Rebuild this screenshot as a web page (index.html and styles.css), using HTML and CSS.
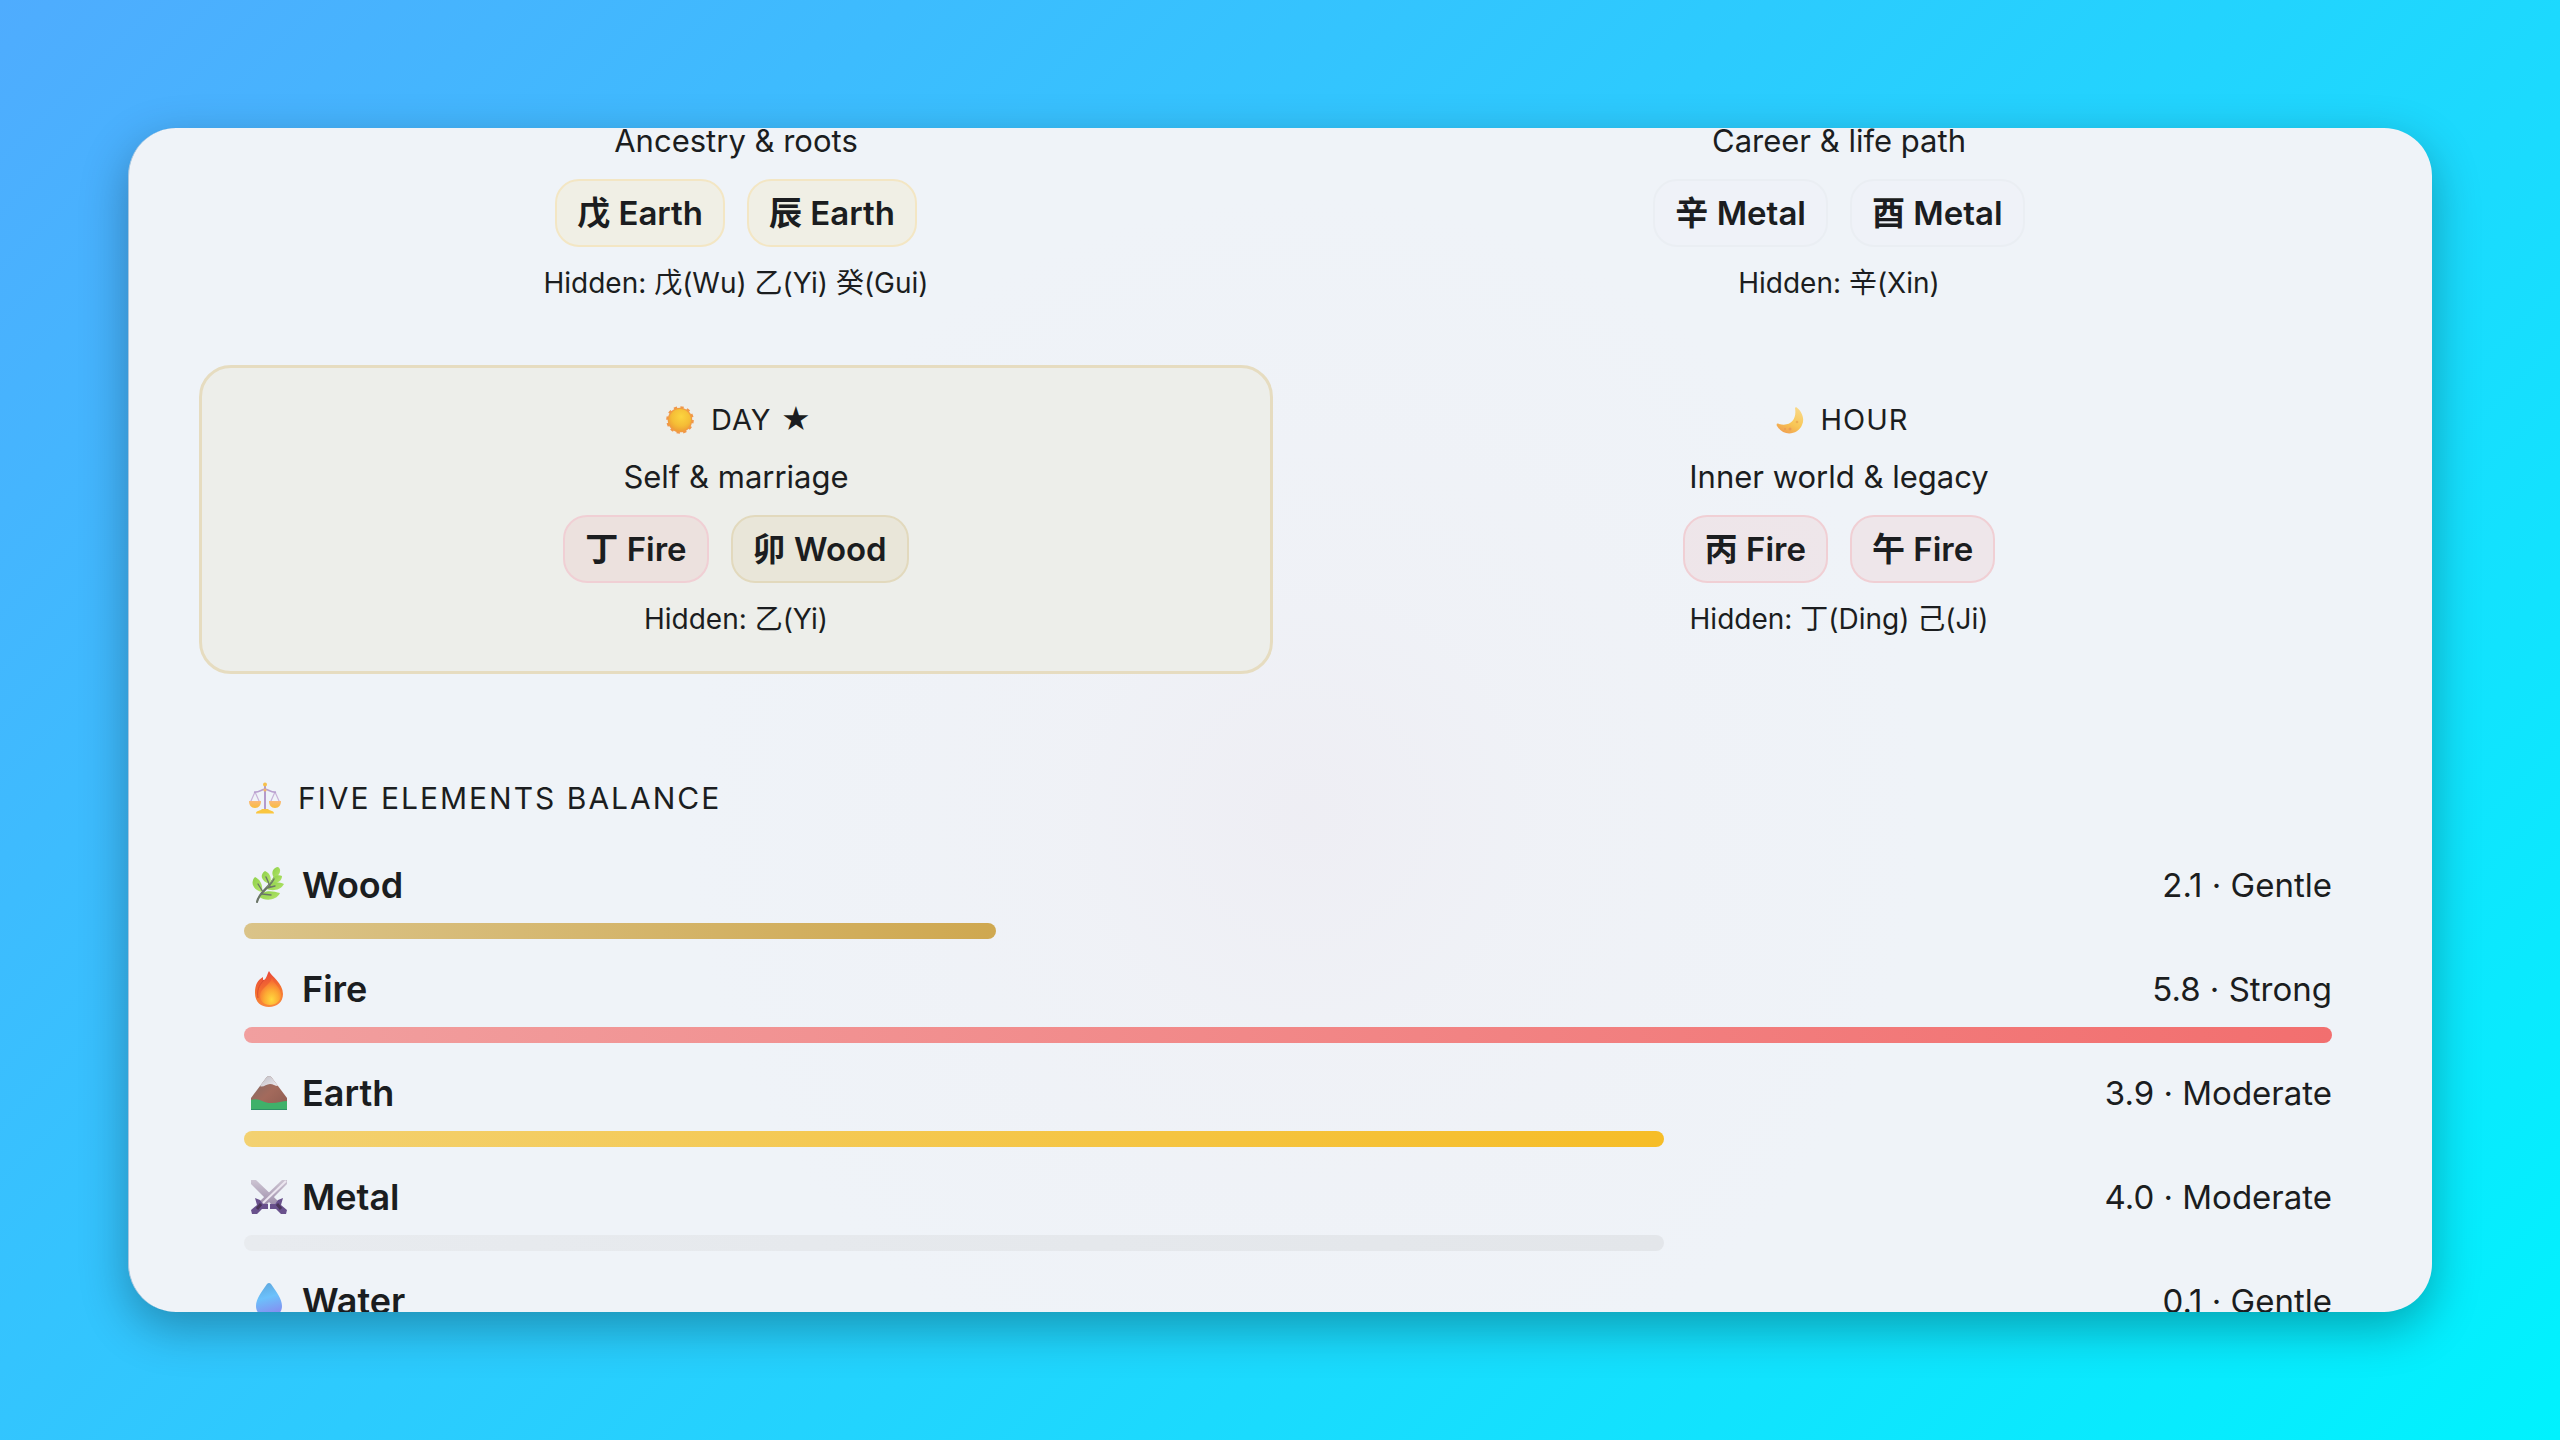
FILE: index.html
```html
<!DOCTYPE html>
<html lang="en">
<head>
<meta charset="utf-8">
<meta name="viewport" content="width=device-width, initial-scale=1">
<title>Five Elements Balance</title>
<link rel="stylesheet" href="styles.css">
</head>
<body>
<main class="sheet">
  <section class="pillars">
    <article class="pillar pillar--top">
      <p class="pillar-desc">Ancestry &amp; roots</p>
      <div class="chips">
        <span class="chip chip--earth">戊 Earth</span>
        <span class="chip chip--earth">辰 Earth</span>
      </div>
      <p class="hidden-stems">Hidden: 戊(Wu) 乙(Yi) 癸(Gui)</p>
    </article>
    <article class="pillar pillar--top">
      <p class="pillar-desc">Career &amp; life path</p>
      <div class="chips">
        <span class="chip chip--metal">辛 Metal</span>
        <span class="chip chip--metal">酉 Metal</span>
      </div>
      <p class="hidden-stems">Hidden: 辛(Xin)</p>
    </article>
    <article class="pillar pillar--day">
      <h2 class="pillar-label">
        <svg class="label-icon" viewBox="0 0 28 28" aria-hidden="true">
          <defs>
            <radialGradient id="sun" cx=".55" cy=".35" r=".7"><stop offset="0" stop-color="#fcd53f"/><stop offset=".6" stop-color="#f5bd36"/><stop offset="1" stop-color="#ee9a35"/></radialGradient>
          </defs>
          <circle cx="14" cy="14" r="12.600" fill="none" stroke="#f0974a" stroke-width="2.400" stroke-dasharray="3.300 3.300"/>
          <circle cx="14" cy="14" r="12.300" fill="#f19b42"/>
          <circle cx="14" cy="14" r="11" fill="url(#sun)"/>
        </svg>
        <span>DAY ★</span>
      </h2>
      <p class="pillar-desc">Self &amp; marriage</p>
      <div class="chips">
        <span class="chip chip--fire">丁 Fire</span>
        <span class="chip chip--wood">卯 Wood</span>
      </div>
      <p class="hidden-stems">Hidden: 乙(Yi)</p>
    </article>
    <article class="pillar">
      <h2 class="pillar-label">
        <svg class="label-icon" viewBox="0 0 28 28" aria-hidden="true">
          <defs>
            <linearGradient id="moon" x1=".8" y1="0" x2=".3" y2="1"><stop offset="0" stop-color="#f9d98a"/><stop offset=".6" stop-color="#f8c655"/><stop offset="1" stop-color="#f0a050"/></linearGradient>
          </defs>
          <path d="M20 1C26 5 29 13 26 19C22 29 7 31 1 20C0 18 1 17 3 18C15 21 21 13 19 2Z" fill="url(#moon)"/>
          <circle cx="21" cy="16" r="1.300" fill="#eeae50"/><circle cx="14" cy="23" r="1.500" fill="#eb9b56"/><circle cx="9" cy="23" r="1" fill="#eb9b56"/>
        </svg>
        <span>HOUR</span>
      </h2>
      <p class="pillar-desc">Inner world &amp; legacy</p>
      <div class="chips">
        <span class="chip chip--fire">丙 Fire</span>
        <span class="chip chip--fire">午 Fire</span>
      </div>
      <p class="hidden-stems">Hidden: 丁(Ding) 己(Ji)</p>
    </article>
  </section>

  <section class="balance">
    <h2 class="balance-title">
      <svg class="title-icon" viewBox="0 0 32 32" aria-hidden="true">
        <defs>
          <linearGradient id="pan" x1="0" y1="0" x2="0" y2="1"><stop offset="0" stop-color="#fbb978"/><stop offset="1" stop-color="#f9bc3c"/></linearGradient>
        </defs>
        <path d="M6 10L1.500 20M6 10L10.500 20M26 10L21.500 20M26 10L30.500 20" stroke="#c9b2d8" stroke-width="1.200" fill="none"/>
        <path d="M5 10C9 11 12 8 16 7C20 8 23 11 27 10" stroke="#b9a0cf" stroke-width="1.700" fill="none"/>
        <path d="M16 4V28" stroke="#b49acb" stroke-width="2"/>
        <circle cx="16" cy="2.500" r="2" fill="#f7c04a"/><circle cx="16" cy="8" r="1.600" fill="#f2b46b"/>
        <path d="M0 19H12C12 23 10 26 6 26S0 23 0 19ZM20 19H32C32 23 30 26 26 26S20 23 20 19Z" fill="url(#pan)"/>
        <path d="M7 31.500C7 28.500 11 29 13 27H19C21 29 25 28.500 25 31.500Z" fill="#fac640"/>
      </svg>
      <span>FIVE ELEMENTS BALANCE</span>
    </h2>
    <ul class="elements">
      <li class="element">
        <div class="element-head">
          <span class="element-name">
            <svg class="element-icon" viewBox="0 0 36 36" aria-hidden="true">
              <defs>
                <linearGradient id="leaf" x1="0" y1="0" x2="1" y2="1"><stop offset="0" stop-color="#8ed04a"/><stop offset="1" stop-color="#b4e56a"/></linearGradient>
              </defs>
              <path d="M6 35C8 24 18 22 25 8" fill="none" stroke="#6b7568" stroke-width="2" stroke-linecap="round"/>
              <g fill="url(#leaf)">
                <path d="M23 11C19 5 23 0 27 0C31 2 29 8 24 11Z"/>
                <path d="M19 17C9 14 9 7 14 4C19 6 21 11 19 17Z"/>
                <path d="M11 25C0 22 0 14 4 10C10 13 12 19 11 25Z"/>
                <path d="M20 16C21 9 27 7 31 9C31 14 26 17 20 16Z"/>
                <path d="M15 22C18 14 27 14 33 17C29 24 21 24 15 22Z"/>
                <path d="M8 30C12 22 22 24 29 26C25 34 14 34 8 30Z"/>
              </g>
              <path d="M6 35C8 26 18 22 23 12M12 25L7 17M19 19L15 10M16 21L24 19M11 27L20 28" fill="none" stroke="#6b7568" stroke-width="1.400" stroke-linecap="round"/>
            </svg>
            Wood
          </span>
          <span class="element-value">2.1 · Gentle</span>
        </div>
        <div class="track"><div class="fill fill--wood" style="width:36%"></div></div>
      </li>
      <li class="element">
        <div class="element-head">
          <span class="element-name">
            <svg class="element-icon" viewBox="0 0 36 36" aria-hidden="true">
              <defs>
                <linearGradient id="flame" x1=".4" y1="0" x2=".6" y2="1"><stop offset="0" stop-color="#e8463a"/><stop offset=".5" stop-color="#f4702f"/><stop offset="1" stop-color="#f98a3c"/></linearGradient>
                <radialGradient id="core" cx=".55" cy=".8" r=".7"><stop offset="0" stop-color="#ffd83f"/><stop offset=".5" stop-color="#fdaa33"/><stop offset="1" stop-color="#f66b32"/></radialGradient>
              </defs>
              <path d="M18 0C20 5 32 12 32 23C32 31 26 36 18 36C10 36 4 31 4 22C4 13 7 9 12 6C12 9 12 9 13 9C16 7 16 3 18 0Z" fill="url(#flame)"/>
              <path d="M21 7C22 12 30 16 30 24C30 30 25 34 19 34C13 34 9 30 9 25C9 17 19 14 21 7Z" fill="url(#core)"/>
              <path d="M13 9C7 15 6 20 7 27" fill="none" stroke="#d94b32" stroke-width="1"/>
            </svg>
            Fire
          </span>
          <span class="element-value">5.8 · Strong</span>
        </div>
        <div class="track"><div class="fill fill--fire" style="width:100%"></div></div>
      </li>
      <li class="element">
        <div class="element-head">
          <span class="element-name">
            <svg class="element-icon" viewBox="0 0 36 36" aria-hidden="true">
              <defs>
                <linearGradient id="rock" x1="0" y1="0" x2="1" y2="1"><stop offset="0" stop-color="#7f6a66"/><stop offset=".5" stop-color="#a36a5c"/><stop offset="1" stop-color="#8c5a50"/></linearGradient>
                <linearGradient id="snow" x1="0" y1="0" x2="1" y2="1"><stop offset="0" stop-color="#bdbbc2"/><stop offset="1" stop-color="#f0edf2"/></linearGradient>
              </defs>
              <path d="M0 35V23L15 3Q18 -1 21 3L36 23V35Z" fill="url(#rock)"/>
              <path d="M9 11L15 3Q18 -1 21 3L27 11C24 11 22 9 19 9C15 9 12 13 9 11Z" fill="url(#snow)"/>
              <path d="M0 25C8 22 12 28 20 28C27 28 32 26 36 26V35H0Z" fill="#3fb16a"/>
              <path d="M0 34H36V35H0Z" fill="#2f8f66"/>
            </svg>
            Earth
          </span>
          <span class="element-value">3.9 · Moderate</span>
        </div>
        <div class="track"><div class="fill fill--earth" style="width:68%"></div></div>
      </li>
      <li class="element">
        <div class="element-head">
          <span class="element-name">
            <svg class="element-icon" viewBox="0 0 36 36" aria-hidden="true">
              <defs>
                <linearGradient id="blade" x1="0" y1="0" x2="0" y2="1"><stop offset="0" stop-color="#cdc5d3"/><stop offset="1" stop-color="#9d8daa"/></linearGradient>
              </defs>
              <path d="M0 1L5 1L27 22L22 27L0 5Z" fill="url(#blade)"/>
              <path d="M36 1L31 1L9 22L14 27L36 5Z" fill="url(#blade)"/>
              <path d="M35 2L12 24" stroke="#ece6f0" stroke-width="2"/>
              <path d="M4 19L9 21L12 25L17 25L17 30L11 30L6 35L1 35L0 31L6 26Z" fill="#69518c"/>
              <path d="M32 19L27 21L24 25L19 25L19 30L25 30L30 35L35 35L36 31L30 26Z" fill="#69518c"/>
              <path d="M10 25L6 30M26 25L30 30" stroke="#493558" stroke-width="3"/>
            </svg>
            Metal
          </span>
          <span class="element-value">4.0 · Moderate</span>
        </div>
        <div class="track"><div class="fill fill--metal" style="width:68%"></div></div>
      </li>
      <li class="element">
        <div class="element-head">
          <span class="element-name">
            <svg class="element-icon" viewBox="0 0 36 36" aria-hidden="true">
              <defs>
                <linearGradient id="drop" x1=".4" y1="0" x2=".6" y2="1"><stop offset="0" stop-color="#5fa9e0"/><stop offset=".4" stop-color="#6cc1fb"/><stop offset="1" stop-color="#8a83ee"/></linearGradient>
              </defs>
              <path d="M16 1Q18 -1 20 1C25 8 31 16 31 23C31 30 25 35 18 35S5 30 5 23C5 16 11 8 16 1Z" fill="url(#drop)"/>
            </svg>
            Water
          </span>
          <span class="element-value">0.1 · Gentle</span>
        </div>
        <div class="track"><div class="fill fill--water" style="width:8%"></div></div>
      </li>
    </ul>
  </section>
</main>
</body>
</html>
```
FILE: styles.css
```css
* {
  box-sizing: border-box;
}

body {
  margin: 0;
  height: 100vh;
  padding: 128px;
  background: linear-gradient(135deg, #4facfe 0%, #00f2fe 100%);
  color: #1b1d20;
  font-family: Inter, "Noto Sans CJK SC", sans-serif;
}

h2,
p,
ul {
  margin: 0;
  padding: 0;
  font-weight: 400;
}

ul {
  list-style: none;
}

.sheet {
  height: 100%;
  overflow: hidden;
  padding: 0 56px 0 70px;
  border-left: 1px solid #a9c6de;
  border-radius: 48px;
  background:
    radial-gradient(circle at 51% 58%, rgba(236, 226, 234, 0.3) 0, rgba(240, 238, 243, 0.3) 240px, transparent 620px),
    #eff3f8;
  box-shadow: 0 16px 48px rgba(0, 0, 0, 0.3);
}

/* Pillars */

.pillars {
  display: grid;
  grid-template-columns: 1fr 1fr;
  gap: 27px 29px;
  margin-top: -9px;
}

.pillar {
  display: flex;
  flex-direction: column;
  align-items: center;
  gap: 16px;
  padding: 32px;
  border: 3px solid transparent;
  border-radius: 32px;
}

.pillar--top {
  padding-top: 0;
  border-top: 0;
}

.pillar--day {
  border-color: #e6dcc0;
  background: #edeeea;
}

.pillar-label {
  display: flex;
  align-items: center;
  gap: 17px;
  padding-left: 6px;
  font-size: 29px;
  line-height: 39px;
  letter-spacing: 1px;
}

.label-icon {
  width: 28px;
  height: 28px;
}

.pillar-desc {
  font-size: 31px;
  line-height: 44px;
}

.chips {
  display: flex;
  gap: 22px;
}

.chip {
  padding: 0 20px;
  border: 2px solid;
  border-radius: 24px;
  font-size: 33px;
  font-weight: 600;
  line-height: 64px;
}

.chip--earth {
  border-color: #f3e6c4;
  background: #f0efe5;
}

.chip--metal {
  border-color: #eaeef3;
  background: #eff2f8;
}

.chip--fire {
  border-color: #f0cfd4;
  background: rgba(240, 113, 113, 0.1);
}

.chip--wood {
  border-color: #e2d9bd;
  background: #e9e6d9;
}

.hidden-stems {
  font-size: 28px;
  line-height: 40px;
}

/* Balance panel */

.balance {
  margin-top: 46px;
  padding: 58px 44px 44px 45px;
}

.balance-title {
  display: flex;
  align-items: center;
  gap: 17px;
  margin-bottom: 43px;
  padding-left: 5px;
  font-size: 30px;
  line-height: 40px;
  letter-spacing: 2px;
}

.title-icon {
  width: 32px;
  height: 32px;
}

.elements {
  display: flex;
  flex-direction: column;
  gap: 26px;
}

.element-head {
  display: flex;
  justify-content: space-between;
  margin-bottom: 14px;
  line-height: 48px;
}

.element-name {
  display: flex;
  align-items: center;
  gap: 15px;
  padding-left: 7px;
  font-size: 36px;
  font-weight: 600;
}

.element-icon {
  width: 36px;
  height: 36px;
}

.element-value {
  font-size: 33px;
}

.track {
  height: 16px;
}

.fill {
  height: 100%;
  border-radius: 8px;
}

.fill--wood {
  background: linear-gradient(90deg, #dac388, #cfa850);
}

.fill--fire {
  background: linear-gradient(90deg, #f19f9f, #f26f6f);
}

.fill--earth {
  background: linear-gradient(90deg, #f3d171, #f6bd27);
}

.fill--metal {
  background: linear-gradient(90deg, #e8ebef, #e3e6ea);
}

.fill--water {
  background: linear-gradient(90deg, #93b8f5, #5b93f0);
}
```
